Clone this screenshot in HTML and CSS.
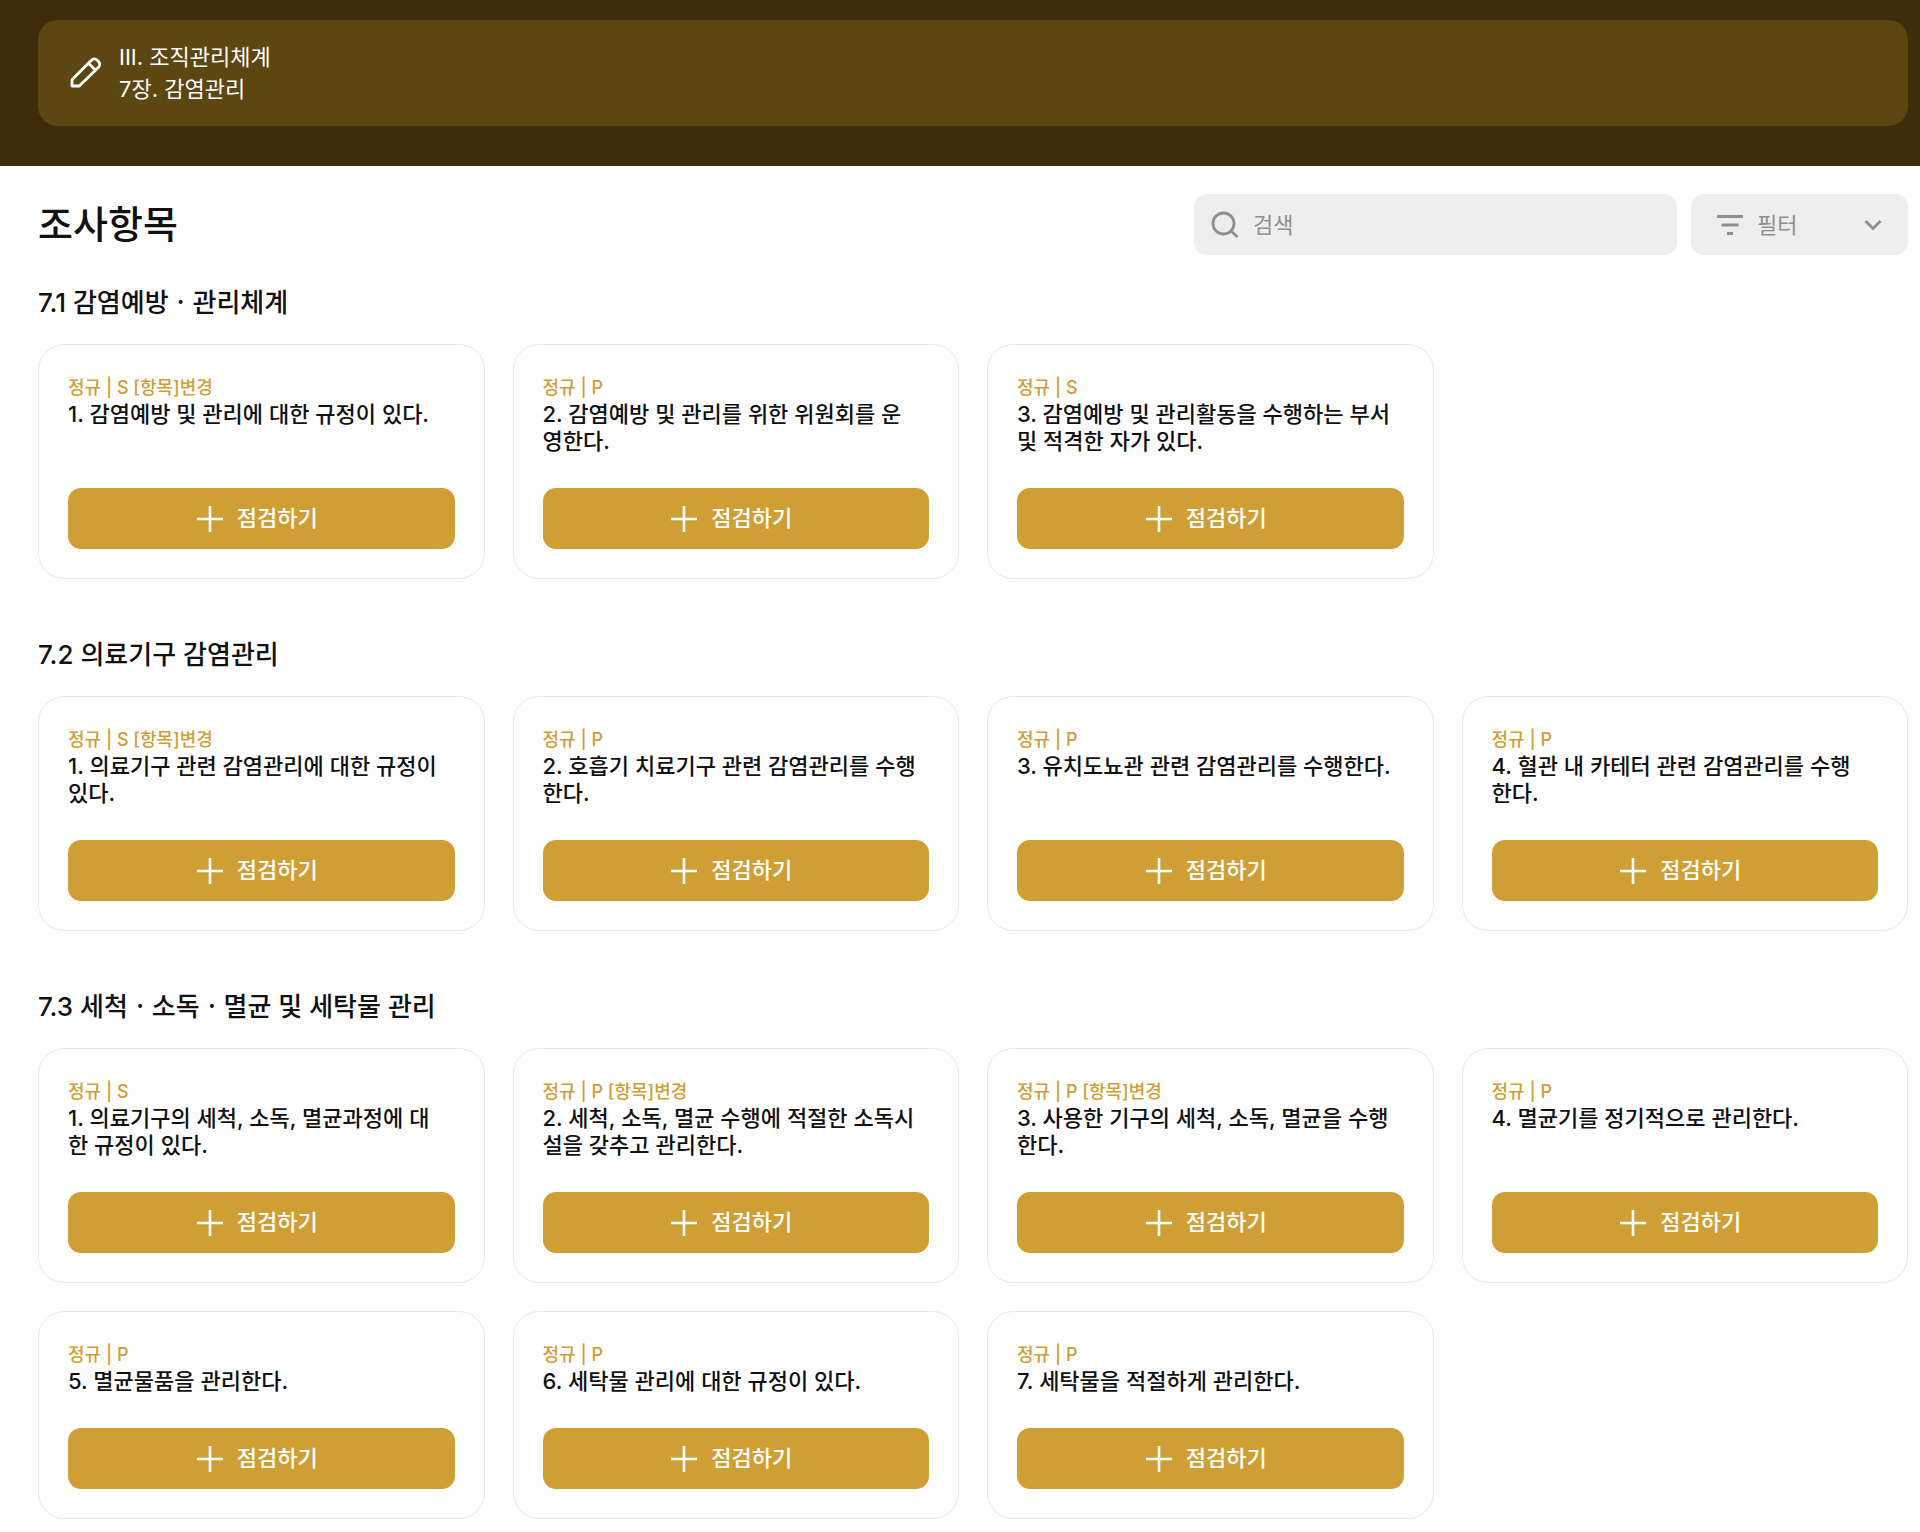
FILE: index.html
```html
<!DOCTYPE html>
<html lang="ko">
<head>
  <meta charset="UTF-8">
  <meta name="viewport" content="width=device-width, initial-scale=1">
  <title>조사항목</title>
  <link rel="stylesheet" href="styles.css">
</head>
<body>
<svg class="sprite" aria-hidden="true">
  <symbol id="plus" viewBox="0 0 26 26">
    <path d="M13 0v26M0 13h26" fill="none" stroke="currentColor" stroke-width="2.6"/>
  </symbol>
</svg>

<header class="header">
  <div class="chapter">
    <svg class="chapter-icon" viewBox="0 0 32 32" aria-hidden="true">
      <path d="M2 29v-6.200L21.400 3.200a4.200 4.200 0 0 1 5.900 0l1.200 1.200a4.200 4.200 0 0 1 0 5.900L9.300 29zM18.500 6.200l7 7"/>
    </svg>
    <div class="chapter-text">
      <div>III. 조직관리체계</div>
      <div>7장. 감염관리</div>
    </div>
  </div>
</header>

<main class="content">
  <div class="toolbar">
    <h1 class="page-title">조사항목</h1>
    <div class="search">
      <svg class="search-icon" viewBox="0 0 28 28" aria-hidden="true"><circle cx="12.500" cy="12.500" r="10.500"/><path d="M20 20l6.500 6"/></svg>
      <input type="search" class="search-input" placeholder="검색" aria-label="검색">
    </div>
    <div class="filter">
      <svg class="filter-icon" viewBox="0 0 26 20" aria-hidden="true"><path d="M0 1.500h26M4.500 10h17M10 18.500h6"/></svg>
      <select class="filter-select" aria-label="필터">
        <option>필터</option>
      </select>
      <svg class="chevron-icon" viewBox="0 0 18 12" aria-hidden="true"><path d="M1.500 2l7.500 7.500 7.500-7.500"/></svg>
    </div>
  </div>

  <section class="section">
    <h2 class="section-title">7.1 감염예방ㆍ관리체계</h2>
    <div class="cards">
      <article class="card">
        <div class="card-meta">정규 | S [항목]변경</div>
        <h3 class="card-title">1. 감염예방 및 관리에 대한 규정이 있다.</h3>
        <button type="button" class="check-button"><svg class="plus-icon" aria-hidden="true"><use href="#plus"/></svg>점검하기</button>
      </article>
      <article class="card">
        <div class="card-meta">정규 | P</div>
        <h3 class="card-title">2. 감염예방 및 관리를 위한 위원회를 운영한다.</h3>
        <button type="button" class="check-button"><svg class="plus-icon" aria-hidden="true"><use href="#plus"/></svg>점검하기</button>
      </article>
      <article class="card">
        <div class="card-meta">정규 | S</div>
        <h3 class="card-title">3. 감염예방 및 관리활동을 수행하는 부서 및 적격한 자가 있다.</h3>
        <button type="button" class="check-button"><svg class="plus-icon" aria-hidden="true"><use href="#plus"/></svg>점검하기</button>
      </article>
    </div>
  </section>

  <section class="section">
    <h2 class="section-title">7.2 의료기구 감염관리</h2>
    <div class="cards">
      <article class="card">
        <div class="card-meta">정규 | S [항목]변경</div>
        <h3 class="card-title">1. 의료기구 관련 감염관리에 대한 규정이 있다.</h3>
        <button type="button" class="check-button"><svg class="plus-icon" aria-hidden="true"><use href="#plus"/></svg>점검하기</button>
      </article>
      <article class="card">
        <div class="card-meta">정규 | P</div>
        <h3 class="card-title">2. 호흡기 치료기구 관련 감염관리를 수행한다.</h3>
        <button type="button" class="check-button"><svg class="plus-icon" aria-hidden="true"><use href="#plus"/></svg>점검하기</button>
      </article>
      <article class="card">
        <div class="card-meta">정규 | P</div>
        <h3 class="card-title">3. 유치도뇨관 관련 감염관리를 수행한다.</h3>
        <button type="button" class="check-button"><svg class="plus-icon" aria-hidden="true"><use href="#plus"/></svg>점검하기</button>
      </article>
      <article class="card">
        <div class="card-meta">정규 | P</div>
        <h3 class="card-title">4. 혈관 내 카테터 관련 감염관리를 수행한다.</h3>
        <button type="button" class="check-button"><svg class="plus-icon" aria-hidden="true"><use href="#plus"/></svg>점검하기</button>
      </article>
    </div>
  </section>

  <section class="section">
    <h2 class="section-title">7.3 세척ㆍ소독ㆍ멸균 및 세탁물 관리</h2>
    <div class="cards">
      <article class="card">
        <div class="card-meta">정규 | S</div>
        <h3 class="card-title">1. 의료기구의 세척, 소독, 멸균과정에 대한 규정이 있다.</h3>
        <button type="button" class="check-button"><svg class="plus-icon" aria-hidden="true"><use href="#plus"/></svg>점검하기</button>
      </article>
      <article class="card">
        <div class="card-meta">정규 | P [항목]변경</div>
        <h3 class="card-title">2. 세척, 소독, 멸균 수행에 적절한 소독시설을 갖추고 관리한다.</h3>
        <button type="button" class="check-button"><svg class="plus-icon" aria-hidden="true"><use href="#plus"/></svg>점검하기</button>
      </article>
      <article class="card">
        <div class="card-meta">정규 | P [항목]변경</div>
        <h3 class="card-title">3. 사용한 기구의 세척, 소독, 멸균을 수행한다.</h3>
        <button type="button" class="check-button"><svg class="plus-icon" aria-hidden="true"><use href="#plus"/></svg>점검하기</button>
      </article>
      <article class="card">
        <div class="card-meta">정규 | P</div>
        <h3 class="card-title">4. 멸균기를 정기적으로 관리한다.</h3>
        <button type="button" class="check-button"><svg class="plus-icon" aria-hidden="true"><use href="#plus"/></svg>점검하기</button>
      </article>
      <article class="card">
        <div class="card-meta">정규 | P</div>
        <h3 class="card-title">5. 멸균물품을 관리한다.</h3>
        <button type="button" class="check-button"><svg class="plus-icon" aria-hidden="true"><use href="#plus"/></svg>점검하기</button>
      </article>
      <article class="card">
        <div class="card-meta">정규 | P</div>
        <h3 class="card-title">6. 세탁물 관리에 대한 규정이 있다.</h3>
        <button type="button" class="check-button"><svg class="plus-icon" aria-hidden="true"><use href="#plus"/></svg>점검하기</button>
      </article>
      <article class="card">
        <div class="card-meta">정규 | P</div>
        <h3 class="card-title">7. 세탁물을 적절하게 관리한다.</h3>
        <button type="button" class="check-button"><svg class="plus-icon" aria-hidden="true"><use href="#plus"/></svg>점검하기</button>
      </article>
    </div>
  </section>
</main>
</body>
</html>
```
FILE: styles.css
```css
* {
  box-sizing: border-box;
}

body {
  margin: 0;
  background-color: #fefefe;
  color: #111;
  font-family: Inter, "Noto Sans CJK KR", sans-serif;
  font-size: 22px;
}

h1, h2, h3 {
  margin: 0;
  font-weight: 500;
}

button, input, select {
  font: inherit;
}

.sprite {
  display: none;
}

/* Header */
.header {
  padding: 20px 12px 40px 38px;
  background-color: #3d2e0b;
}

.chapter {
  display: flex;
  align-items: center;
  gap: 17px;
  padding: 21px 32px;
  border-radius: 20px;
  background-color: #5c4612;
  color: white;
  line-height: 32px;
}

.chapter-icon {
  width: 32px;
  height: 32px;
  fill: none;
  stroke: white;
  stroke-width: 2.8;
  stroke-linejoin: round;
}

/* Content */
.content {
  padding: 28px 12px 12px 38px;
}

.toolbar {
  display: flex;
  gap: 14px;
  margin-bottom: 32px;
}

.page-title {
  flex: 1;
  font-size: 38px;
  line-height: 60px;
}

.search, .filter {
  display: flex;
  align-items: center;
  height: 61px;
  border-radius: 13px;
  background-color: #eee;
  color: #8f8f8f;
}

.search {
  flex: 0 1 483px;
  gap: 14px;
  padding: 0 17px;
}

.filter {
  flex: 0 0 217px;
  gap: 14px;
  padding: 0 26px;
}

.search-icon, .filter-icon, .chevron-icon {
  flex: none;
  fill: none;
  stroke: #8f8f8f;
  stroke-width: 2.8;
}

.search-icon {
  width: 28px;
  height: 28px;
}

.filter-icon {
  width: 26px;
  height: 20px;
}

.chevron-icon {
  width: 18px;
  height: 12px;
}

.search-input, .filter-select {
  flex: 1;
  min-width: 0;
  padding: 0;
  border: none;
  outline: none;
  background: none;
  color: inherit;
  appearance: none;
}

.search-input::placeholder {
  color: #8f8f8f;
  opacity: 1;
}

/* Sections */
.section + .section {
  margin-top: 60px;
}

.section-title {
  margin-bottom: 25px;
  font-size: 26px;
  line-height: 32px;
}

.cards {
  display: grid;
  grid-template-columns: repeat(4, 1fr);
  gap: 28px;
}

.card {
  display: flex;
  flex-direction: column;
  padding: 29px;
  border: 1px solid #e8e8e8;
  border-radius: 26px;
  line-height: 27px;
}

.card-meta {
  color: #cf9f35;
  font-size: 18px;
  font-weight: 500;
}

.card-title {
  margin-bottom: 33px;
  padding-right: 12px;
  font-size: 22px;
  word-break: break-all;
}

.check-button {
  display: flex;
  align-items: center;
  justify-content: center;
  gap: 14px;
  height: 61px;
  margin-top: auto;
  padding: 0 8px 0 0;
  border: none;
  border-radius: 13px;
  background-color: #cf9f35;
  color: white;
  font-weight: 500;
  cursor: pointer;
}

.plus-icon {
  width: 26px;
  height: 26px;
}
```
